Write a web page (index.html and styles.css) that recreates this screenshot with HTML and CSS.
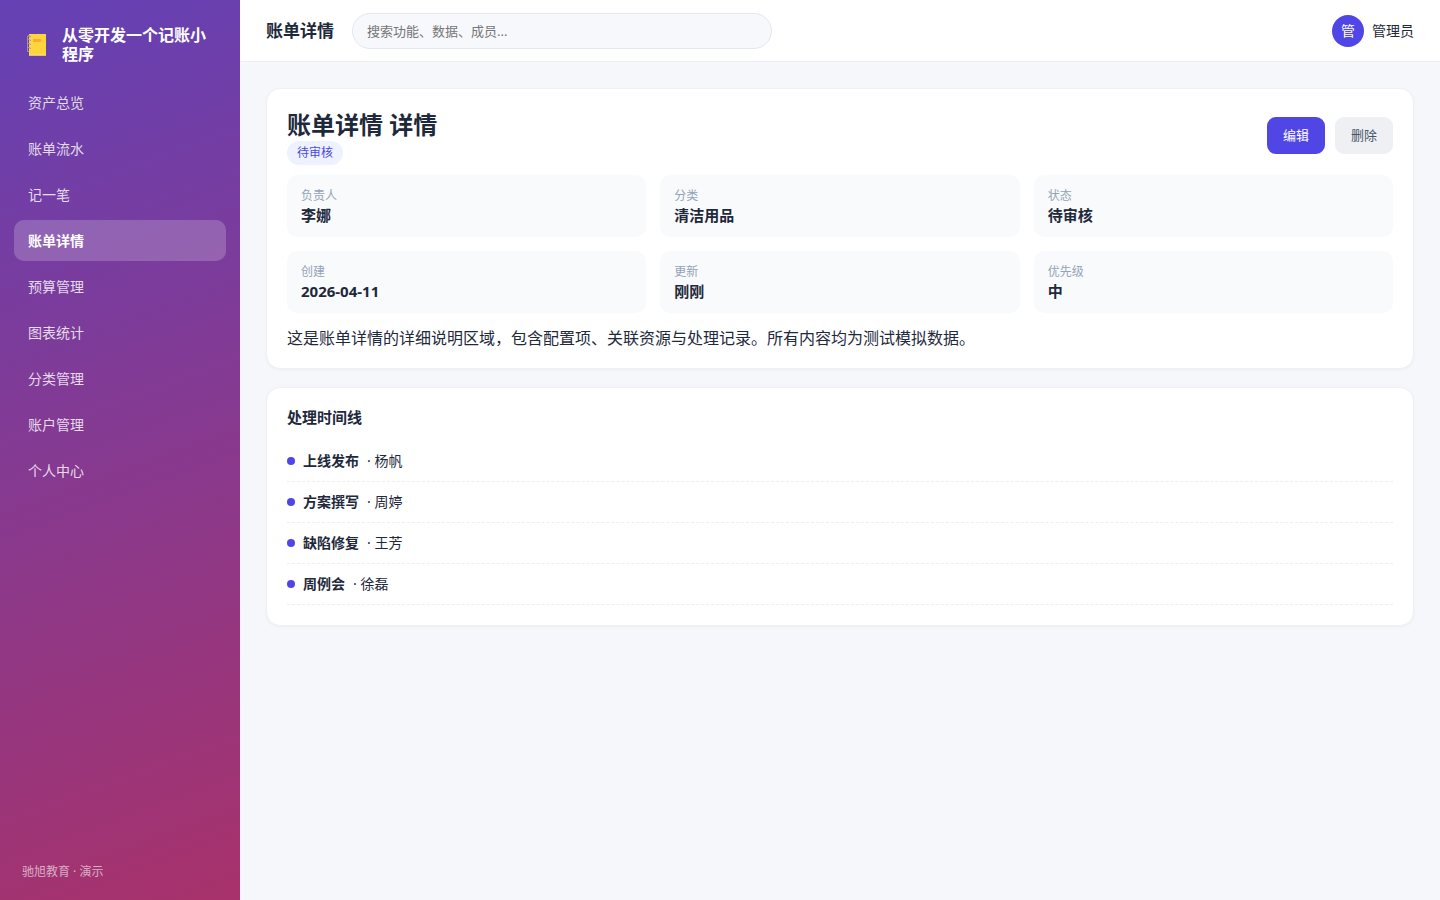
FILE: index.html
```html
<!DOCTYPE html>
<html lang="zh-CN">
<head>
    <meta charset="UTF-8">
    <meta name="viewport" content="width=device-width, initial-scale=1.0">
    <title>账单详情</title>
    <link rel="stylesheet" href="styles.css">
</head>
<body>
    <div class="layout">
        <aside class="sidebar">
            <div class="brand">
                <svg class="logo" viewBox="0 0 22 24" aria-hidden="true">
                    <rect x="3" y="1" width="17" height="22" fill="#ffd53d"/>
                    <rect x="3" y="21" width="17" height="1" fill="#e6d9b0"/>
                    <rect x="3" y="22" width="17" height="1" fill="#fbc02d"/>
                    <rect x="7" y="6" width="8" height="3" fill="#ffab2e"/>
                    <path d="M4 3H1.500V18.500H3M1.500 6L5 7.500M1.500 10L5 11.500M1.500 14L5 15.500M2 2.500L5 4" fill="none" stroke="#a294a8" stroke-width="1"/>
                </svg>
                <span>从零开发一个记账小程序</span>
            </div>
            <nav class="menu">
                <a href="#">资产总览</a>
                <a href="#">账单流水</a>
                <a href="#">记一笔</a>
                <a href="#" class="active">账单详情</a>
                <a href="#">预算管理</a>
                <a href="#">图表统计</a>
                <a href="#">分类管理</a>
                <a href="#">账户管理</a>
                <a href="#">个人中心</a>
            </nav>
            <div class="side-foot">驰旭教育 · 演示</div>
        </aside>

        <div class="main">
            <header class="topbar">
                <h1>账单详情</h1>
                <input class="search" type="search" placeholder="搜索功能、数据、成员..." aria-label="搜索">
                <div class="user">
                    <span class="avatar">管</span>
                    <span>管理员</span>
                </div>
            </header>

            <main class="content">
                <section class="card">
                    <div class="detail-head">
                        <div>
                            <h2>账单详情 详情</h2>
                            <span class="badge">待审核</span>
                        </div>
                        <div class="actions">
                            <button type="button" class="btn primary">编辑</button>
                            <button type="button" class="btn">删除</button>
                        </div>
                    </div>
                    <dl class="info-grid">
                        <div class="info"><dt>负责人</dt><dd>李娜</dd></div>
                        <div class="info"><dt>分类</dt><dd>清洁用品</dd></div>
                        <div class="info"><dt>状态</dt><dd>待审核</dd></div>
                        <div class="info"><dt>创建</dt><dd>2026-04-11</dd></div>
                        <div class="info"><dt>更新</dt><dd>刚刚</dd></div>
                        <div class="info"><dt>优先级</dt><dd>中</dd></div>
                    </dl>
                    <p class="desc">这是账单详情的详细说明区域，包含配置项、关联资源与处理记录。所有内容均为测试模拟数据。</p>
                </section>

                <section class="card">
                    <h3>处理时间线</h3>
                    <ul class="timeline">
                        <li><i class="dot"></i><b>上线发布</b><span>· 杨帆</span></li>
                        <li><i class="dot"></i><b>方案撰写</b><span>· 周婷</span></li>
                        <li><i class="dot"></i><b>缺陷修复</b><span>· 王芳</span></li>
                        <li><i class="dot"></i><b>周例会</b><span>· 徐磊</span></li>
                    </ul>
                </section>
            </main>
        </div>
    </div>
</body>
</html>
```

FILE: styles.css
```css
* { box-sizing: border-box; margin: 0; padding: 0; }
body {
    font-family: "Noto Sans", "Noto Sans CJK SC", sans-serif;
    font-size: 14px;
    line-height: 20px;
    color: #1e293b;
    background: #f5f7fb;
}
.layout {
    display: flex;
    min-height: 100vh;
}

/* sidebar */
.sidebar {
    width: 240px;
    flex-shrink: 0;
    display: flex;
    flex-direction: column;
    padding: 18px 14px;
    color: #fff;
    background: linear-gradient(160deg, #6441b5, #a8326b);
}
.brand {
    display: flex;
    align-items: center;
    gap: 14px;
    padding: 8px 12px 18px;
    font-size: 16px;
    font-weight: 700;
    line-height: 19px;
}
.logo {
    width: 22px;
    height: 24px;
    flex-shrink: 0;
}
.menu {
    display: flex;
    flex-direction: column;
    gap: 5px;
}
.menu a {
    padding: 10px 14px;
    border-radius: 10px;
    line-height: 21px;
    color: rgba(255, 255, 255, 0.82);
    text-decoration: none;
}
.menu a.active {
    background: rgba(255, 255, 255, 0.2);
    color: #fff;
    font-weight: 700;
}
.side-foot {
    margin-top: auto;
    padding: 0 8px;
    font-size: 12px;
    color: rgba(255, 255, 255, 0.6);
}

/* top bar */
.main {
    flex: 1;
    min-width: 0;
}
.topbar {
    display: flex;
    align-items: center;
    gap: 18px;
    padding: 13px 26px 12px;
    background: #fff;
    border-bottom: 1px solid #eceef3;
}
.topbar h1 {
    font-size: 17px;
}
.search {
    flex: 0 1 420px;
    height: 36px;
    padding: 0 14px;
    border: 1px solid #e5e7ef;
    border-radius: 18px;
    background: #f7f8fc;
    font-family: inherit;
    font-size: 13px;
    outline: none;
}
.search::placeholder { color: #757575; }
.user {
    display: flex;
    align-items: center;
    gap: 8px;
    margin-left: auto;
}
.avatar {
    width: 32px;
    height: 32px;
    border-radius: 50%;
    background: #4f46e5;
    color: #fff;
    line-height: 32px;
    text-align: center;
}

/* content */
.content {
    display: flex;
    flex-direction: column;
    gap: 18px;
    padding: 26px;
}
.card {
    padding: 20px;
    background: #fff;
    border: 1px solid #eef0f5;
    border-radius: 14px;
    box-shadow: 0 1px 3px rgba(15, 23, 42, 0.04);
}
.detail-head {
    display: flex;
    justify-content: space-between;
    align-items: center;
    margin-bottom: 10px;
}
.detail-head h2 {
    font-size: 24px;
    line-height: 32px;
}
.badge {
    display: block;
    width: fit-content;
    padding: 2px 10px;
    border-radius: 12px;
    background: #eef2ff;
    color: #4f46e5;
    font-size: 12px;
}
.actions {
    display: flex;
    gap: 10px;
    padding-bottom: 4px;
}
.btn {
    padding: 8px 16px;
    border: 0;
    border-radius: 9px;
    background: #eef0f4;
    color: #475569;
    font-family: inherit;
    font-size: 13px;
    line-height: 21px;
    cursor: pointer;
}
.btn.primary {
    background: #4f46e5;
    color: #fff;
}
.info-grid {
    display: grid;
    grid-template-columns: repeat(3, 1fr);
    gap: 14px;
}
.info {
    padding: 11px 14px;
    border-radius: 10px;
    background: #f9fafc;
}
.info dt {
    font-size: 12px;
    color: #94a3b8;
}
.info dd {
    padding-bottom: 2px;
    font-size: 15px;
    font-weight: 700;
    line-height: 18px;
}
.desc {
    margin-top: 15px;
    font-size: 16px;
    line-height: 20px;
}
.card h3 {
    margin-bottom: 15px;
    font-size: 15px;
    line-height: 18px;
}
.timeline {
    list-style: none;
}
.timeline li {
    display: flex;
    align-items: center;
    gap: 8px;
    padding: 10px 0;
    border-bottom: 1px dashed #eceef2;
}
.dot {
    width: 8px;
    height: 8px;
    border-radius: 50%;
    background: #4f46e5;
}
```
